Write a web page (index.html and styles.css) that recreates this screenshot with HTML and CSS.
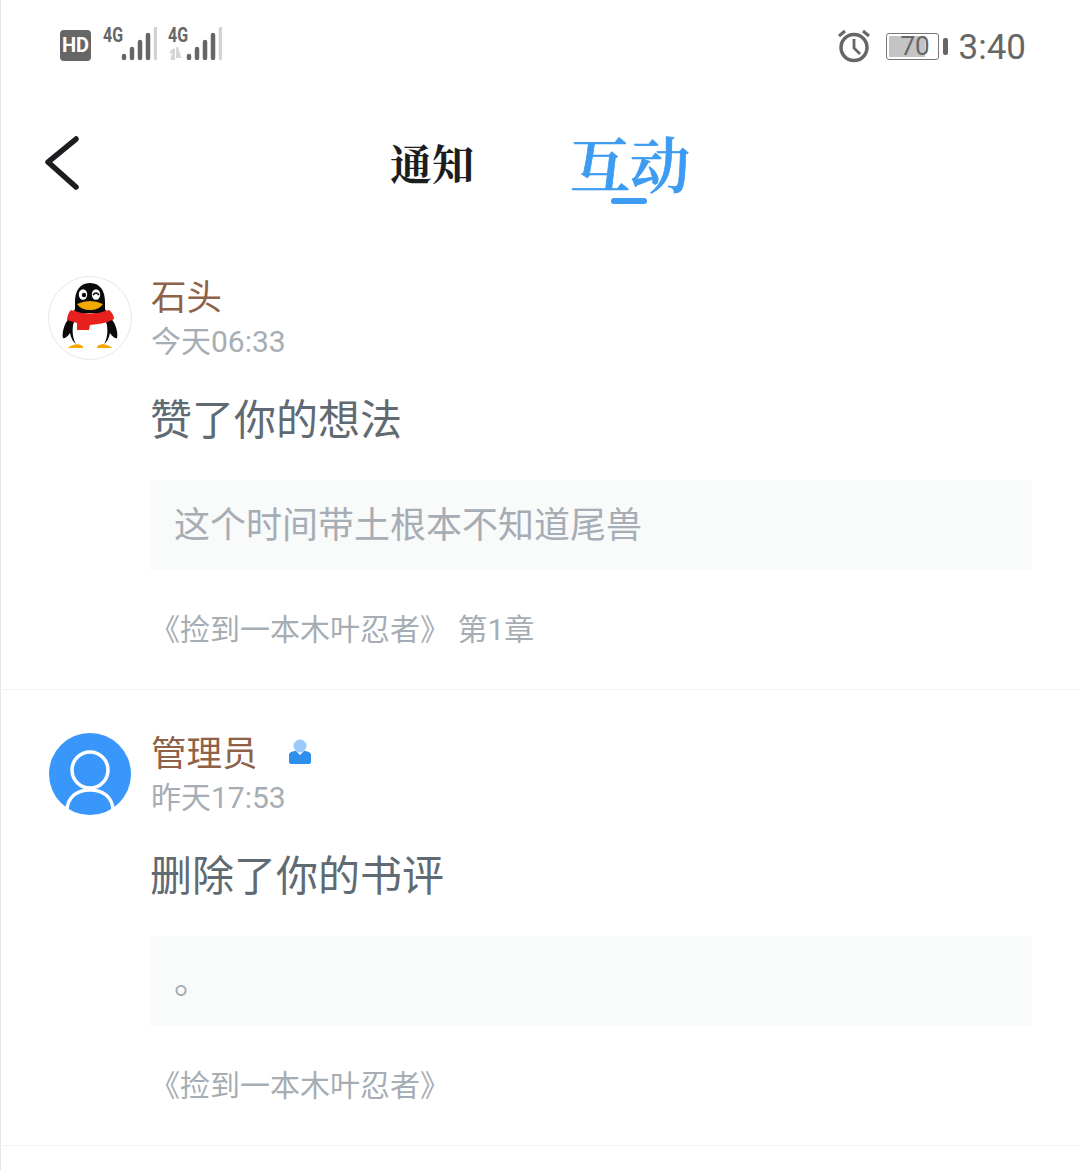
FILE: index.html
```html
<!DOCTYPE html>
<html lang="zh-CN">
<head>
<meta charset="utf-8">
<title>互动</title>
<link rel="stylesheet" href="styles.css">
</head>
<body>
<div class="page">
  <header class="status">
    <div class="status-left">
      <span class="hd">HD</span>
      <div class="net">
        <span class="net-label">4G</span>
        <svg class="bars" width="54" height="36" viewBox="0 0 54 36"><g stroke-linecap="round" stroke-width="4.500" stroke="#666"><path d="M21 31v-2M29 31V22M37 31V15M45 31V8"/><path d="M53 31V2" stroke="#d2d2d2"/></g></svg>
      </div>
      <div class="net">
        <span class="net-label">4G</span>
        <svg class="bars" width="54" height="36" viewBox="0 0 54 36"><path d="M6 22v10H3.500zM2 26l4-4M9 20v10h3z" fill="#d6d6d6" stroke="#d6d6d6" stroke-width="2"/><g stroke-linecap="round" stroke-width="4.500" stroke="#666"><path d="M21 31v-2M29 31V22M37 31V15M45 31V8"/><path d="M53 31V2" stroke="#d2d2d2"/></g></svg>
      </div>
    </div>
    <div class="status-right">
      <svg class="alarm" width="34" height="34" viewBox="0 0 34 34" fill="none" stroke="#666"><circle cx="17" cy="18.500" r="13" stroke-width="3.500"/><path d="M17 10v9l6 6" stroke-width="2.800"/><path d="M2 7l6-5M32 7l-6-5" stroke-width="3"/></svg>
      <div class="battery">
        <div class="battery-body"><span class="battery-fill"></span><span class="battery-num">70</span></div>
        <span class="battery-cap"></span>
      </div>
      <span class="clock">3:40</span>
    </div>
  </header>

  <nav class="nav">
    <svg class="back" width="36" height="58" viewBox="0 0 36 58" fill="none"><path d="M33 5L5 28l28 25" stroke="#1b1d20" stroke-width="5.500" stroke-linecap="round" stroke-linejoin="round"/></svg>
    <div class="tabs">
      <span class="tab">通知</span>
      <span class="tab tab-active">互动</span>
    </div>
  </nav>

  <section class="item">
    <div class="item-head">
      <div class="avatar avatar-qq">
        <svg width="82" height="82" viewBox="0 0 82 82">
          <path d="M41 6c-11 0-15 9-15 19v7c-2 4-5 8-8 12-4 6-5 14-4 17 2 1 5-2 7-5 1 5 3 9 6 11h28c3-2 5-6 6-11 2 3 5 6 7 5 1-3 0-11-4-17-3-4-6-8-8-12v-7C56 15 52 6 41 6z" fill="#0a0a0a"/>
          <path d="M41 36c-9 0-15 4-17 12-1 8 0 15 4 21h26c4-6 5-13 4-21-2-8-8-12-17-12z" fill="#fff"/>
          <ellipse cx="34" cy="17.500" rx="4.200" ry="5.200" fill="#fff"/>
          <ellipse cx="47" cy="17.500" rx="4.200" ry="5.200" fill="#fff"/>
          <circle cx="35" cy="18" r="2.200" fill="#0a0a0a"/>
          <path d="M44 18q3-4 6 0" stroke="#0a0a0a" stroke-width="1.600" fill="none"/>
          <path d="M28 27q13-6 26 0-4 6-13 6t-13-6z" fill="#f5a800"/>
          <path d="M22 33q19 7 38 0c3 2 5 6 5 9-5 3-12 5-24 6l-1 5h-12v-7l-10-3c0-4 2-8 4-10z" fill="#e8201e"/>
          <path d="M28 67q-8 2-9 4h15q1-3-6-4zM54 67q8 2 9 4H48q-1-3 6-4z" fill="#f5a800"/>
        </svg>
      </div>
      <div class="who">
        <div class="name-row"><span class="name">石头</span></div>
        <span class="time">今天06:33</span>
      </div>
    </div>
    <div class="item-body">
      <p class="action">赞了你的想法</p>
      <div class="quote">这个时间带土根本不知道尾兽</div>
      <p class="source">《捡到一本木叶忍者》 第1章</p>
    </div>
  </section>

  <section class="item">
    <div class="item-head">
      <div class="avatar avatar-admin">
        <svg width="82" height="82" viewBox="0 0 82 82" fill="none" stroke="#fff" stroke-width="3.500"><circle cx="41" cy="37" r="18"/><path d="M18 78c0-14 10-21 23-21s23 7 23 21"/></svg>
      </div>
      <div class="who">
        <div class="name-row">
          <span class="name">管理员</span>
          <svg class="badge" width="22" height="26" viewBox="0 0 22 26"><circle cx="11" cy="7" r="6.500" fill="#9cc9fb"/><path d="M2 25a2 2 0 0 1-2-2v-7c0-3 4-4 7-4l4 4 4-4c3 0 7 1 7 4v7a2 2 0 0 1-2 2z" fill="#2f8fec"/></svg>
        </div>
        <span class="time">昨天17:53</span>
      </div>
    </div>
    <div class="item-body">
      <p class="action">删除了你的书评</p>
      <div class="quote">。</div>
      <p class="source">《捡到一本木叶忍者》</p>
    </div>
  </section>
</div>
</body>
</html>
```
FILE: styles.css
```css
* { box-sizing: border-box; }
html, body { margin: 0; padding: 0; background: #fff; }
body { font-family: "Roboto", "Noto Sans CJK SC", sans-serif; }
.page { width: 1080px; height: 1170px; overflow: hidden; box-shadow: inset 1px 0 0 #e6e6e6; }

.status { height: 90px; display: flex; justify-content: space-between; align-items: flex-start; padding: 29px 54px 0 60px; }
.status-left { display: flex; align-items: flex-start; gap: 12px; }
.hd { width: 31px; height: 31px; margin-top: 1px; border-radius: 4px; background: #666; color: #fff; font: bold 20px/31px "Roboto", sans-serif; text-align: center; }
.net { position: relative; width: 53px; height: 36px; top: -2px; }
.net-label { position: absolute; left: 0; top: -2px; font: bold 20px/20px "Roboto", sans-serif; color: #666; transform: scaleX(.8); transform-origin: left; }
.bars { display: block; }
.status-right { display: flex; align-items: center; height: 36px; margin-top: -1px; }
.alarm { margin-right: 15px; }
.battery { display: flex; align-items: center; gap: 4px; margin-right: 11px; }
.battery-body { position: relative; width: 53px; height: 27px; border: 1.500px solid #777; border-radius: 3px; padding: 2px; }
.battery-fill { display: block; width: 78%; height: 100%; background: #c4c4c4; }
.battery-num { position: absolute; inset: 0 0 0 6px; text-align: center; font: 26px/25px "Roboto", sans-serif; color: #666; }
.battery-cap { width: 5px; height: 17px; border-radius: 2px; background: #666; }
.clock { font: 35px/36px "Roboto", sans-serif; color: #666; margin-top: 3px; }

.nav { position: relative; height: 144px; }
.back { position: absolute; left: 43px; top: 44px; }
.tabs { position: absolute; left: 390px; top: 37px; display: flex; align-items: center; gap: 96px; height: 70px; }
.tab { font-family: "Noto Serif CJK SC", "Noto Sans CJK SC", serif; font-size: 42px; font-weight: 700; color: #1b1d20; line-height: 70px; }
.tab-active { position: relative; font-size: 60px; font-weight: 600; color: #3d9cf2; -webkit-text-stroke: 0.7px #3d9cf2; }
.tab-active::after { content: ""; position: absolute; left: 41px; bottom: -7px; width: 36px; height: 6px; border-radius: 3px; background: #3d9cf2; }

.item { height: 456px; border-bottom: 1px solid #f2f3f4; padding: 42px 48px 0 48px; }
.item-head { display: flex; gap: 19px; }
.avatar { width: 84px; height: 84px; border-radius: 50%; flex: none; overflow: hidden; display: flex; align-items: center; justify-content: center; }
.avatar-qq { border: 1px solid #e8e8e8; background: #fff; }
.avatar-admin { background: #3997fb; background-clip: content-box; padding: 1px; }
.who { display: flex; flex-direction: column; }
.name-row { display: flex; align-items: center; gap: 31px; height: 40px; margin-top: 2px; }
.name { font-size: 35.500px; line-height: 40px; color: #8f6248; }
.badge { display: block; margin-bottom: 4px; }
.time { margin-top: 4px; font-size: 30px; line-height: 40px; color: #a6adb4; }
.item-body { padding-left: 102px; }
.action { margin: 29px 0 0; font-size: 42px; line-height: 60px; color: #5f6a72; }
.quote { margin-top: 29px; width: 882px; height: 90px; padding-left: 24px; background: #f9fafa; font-size: 36px; line-height: 92px; color: #a6adb4; }
.source { margin: 38px 0 0 0; font-size: 30px; line-height: 44px; color: #a6adb4; }
```
